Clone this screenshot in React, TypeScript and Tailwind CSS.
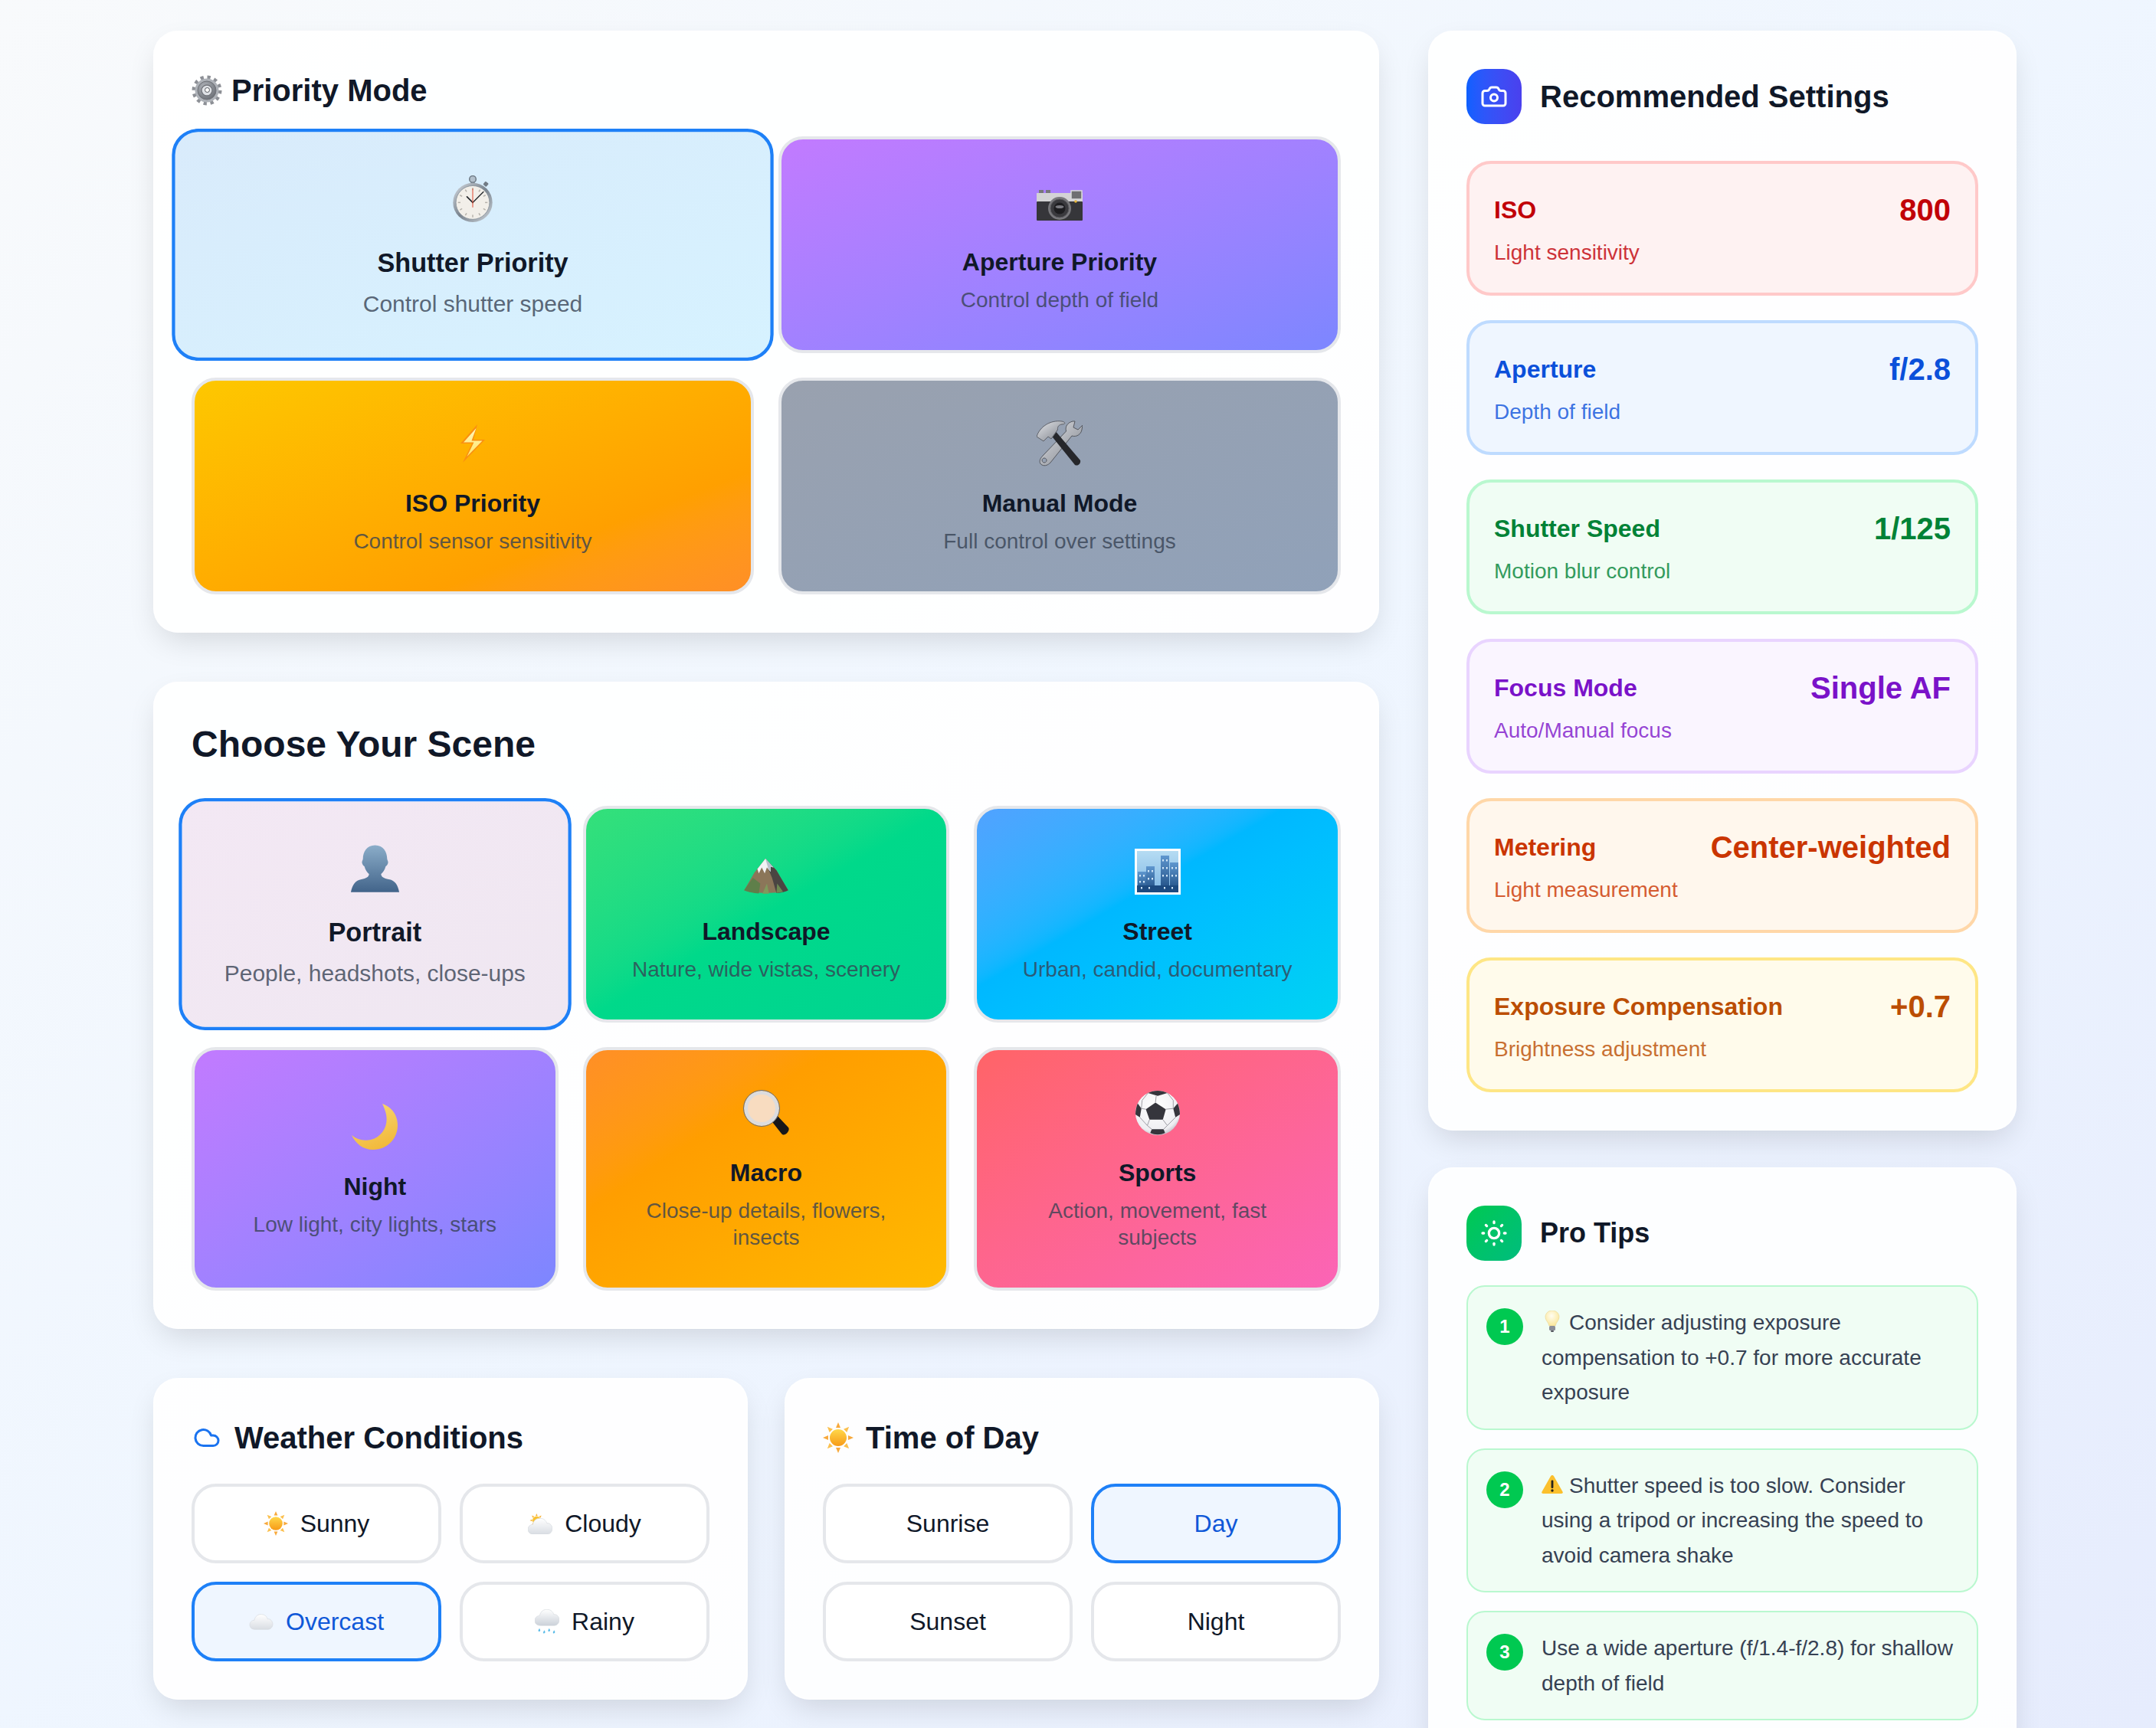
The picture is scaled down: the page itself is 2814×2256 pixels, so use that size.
import React from "react";
import { Camera, Cloud, SunMedium } from "lucide-react";

const FONT = "font-['Liberation_Sans',Arial,sans-serif]";

function Gear({ className = "" }: { className?: string }) {
  return (
    <svg viewBox="0 0 40 40" className={className}>
      <defs>
        <radialGradient id="gearBody" cx="40%" cy="35%" r="75%">
          <stop offset="0%" stopColor="#b9bdc3" />
          <stop offset="100%" stopColor="#62666d" />
        </radialGradient>
      </defs>
      <circle cx="20" cy="20" r="17" fill="none" stroke="#8d9096" strokeWidth="5" strokeDasharray="4.2 4.7" />
      <circle cx="20" cy="20" r="15.500" fill="#aeb2b8" />
      <circle cx="20" cy="20" r="12" fill="url(#gearBody)" stroke="#6f7278" strokeWidth="1" />
      <circle cx="20" cy="20" r="7" fill="#dfe2e6" stroke="#74777d" strokeWidth="1.400" />
      <circle cx="20.500" cy="19.500" r="3" fill="#fafafa" stroke="#55585e" strokeWidth="1" />
    </svg>
  );
}

function Stopwatch({ className = "" }: { className?: string }) {
  const ticks = Array.from({ length: 12 }, (_, i) => i * 30);
  return (
    <svg viewBox="0 0 50 58" className={className}>
      <defs>
        <linearGradient id="swRim" x1="0" y1="0" x2="1" y2="1">
          <stop offset="0%" stopColor="#d6dce2" />
          <stop offset="50%" stopColor="#79838e" />
          <stop offset="100%" stopColor="#cfd5db" />
        </linearGradient>
      </defs>
      <rect x="22.500" y="5" width="5" height="7" fill="#7f8a95" />
      <circle cx="25" cy="4.500" r="4" fill="#b3c0cc" stroke="#6e7a85" strokeWidth="1.400" />
      <rect x="38.500" y="8" width="5" height="5" rx="1" fill="#717b85" transform="rotate(40 41 10.500)" />
      <circle cx="25" cy="33" r="24" fill="url(#swRim)" />
      <circle cx="25" cy="33" r="20.500" fill="#f2efe9" stroke="#8a939c" strokeWidth="0.800" />
      {ticks.map((a) => (
        <rect key={a} x="24.300" y="15" width="1.400" height="3" fill="#b6b2ab" transform={`rotate(${a} 25 33)`} />
      ))}
      <path d="M25 33 L38 20" stroke="#26292d" strokeWidth="1.300" strokeLinecap="round" />
      <path d="M25 33 L18 26" stroke="#26292d" strokeWidth="1.600" strokeLinecap="round" />
      <path d="M25 16 L25 39" stroke="#e2533c" strokeWidth="1" />
    </svg>
  );
}

function CameraEmoji({ className = "" }: { className?: string }) {
  return (
    <svg viewBox="0 0 60 40" className={className}>
      <rect x="3" y="0" width="6" height="5" fill="#77777c" />
      <rect x="12" y="0" width="6" height="5" fill="#77777c" />
      <rect x="0" y="4" width="60" height="12" fill="#d3d3d5" />
      <rect x="0" y="15" width="60" height="25" rx="1" fill="#36363a" />
      <rect x="45" y="1" width="14" height="11" fill="#6f6f72" stroke="#d9d9db" strokeWidth="1.500" />
      <circle cx="30" cy="24" r="15" fill="#78787c" />
      <circle cx="30" cy="24" r="12" fill="#3a3a3e" stroke="#5a5a5e" strokeWidth="1" />
      <circle cx="30" cy="24" r="7.500" fill="#1d1d20" />
      <ellipse cx="30" cy="22" rx="5.500" ry="2" fill="#7a7a80" />
      <circle cx="51" cy="15" r="1.800" fill="#e8b73a" />
    </svg>
  );
}

function HammerWrench({ className = "" }: { className?: string }) {
  return (
    <svg viewBox="0 0 60 60" className={className}>
      <defs>
        <linearGradient id="hwMetal" x1="0" y1="0" x2="1" y2="1">
          <stop offset="0%" stopColor="#e4e6ea" />
          <stop offset="100%" stopColor="#7c8088" />
        </linearGradient>
      </defs>
      <path
        d="M47 1 C40 3 37 8 38.500 14 L8 46 C3 51 3 56 7 58 C11 60 15 58 18 55 L46 20 C52 22 58 18 59 12 L60 6 L54 12 L48 9 L50 1 Z M10 49 A3 3 0 1 0 10.100 49 Z"
        fillRule="evenodd"
        fill="url(#hwMetal)"
        stroke="#55585f"
        strokeWidth="1"
      />
      <path d="M17 17 L23 12 L57 52 C58 56 54 60 50 58 Z" fill="#26272b" />
      <path d="M0 21 C4 8 18 -1 33 1 C38 2 38 5 33 5 C29 5.500 27 8 27.500 12 L19 24 L15 21 L9 27 Z" fill="url(#hwMetal)" stroke="#5d6068" strokeWidth="1" />
    </svg>
  );
}

function Bolt({ className = "" }: { className?: string }) {
  return (
    <svg viewBox="0 0 32 50" className={className}>
      <defs>
        <linearGradient id="boltFill" x1="0" y1="0" x2="0" y2="1">
          <stop offset="0%" stopColor="#fff6b8" />
          <stop offset="100%" stopColor="#ffe66a" />
        </linearGradient>
      </defs>
      <path d="M22 0 L0 25 L15 25 L3 50 L32 20 L17 20 Z" fill="#f98f12" />
      <path d="M20.500 5 L4 23.500 L17.500 23.500 L8.500 42 L28.500 21.500 L14.500 21.500 Z" fill="url(#boltFill)" />
    </svg>
  );
}

function Bust({ className = "" }: { className?: string }) {
  return (
    <svg viewBox="0 0 64 62" className={className}>
      <defs>
        <linearGradient id="bustFill" x1="0" y1="0" x2="0" y2="1">
          <stop offset="0%" stopColor="#8badc9" />
          <stop offset="100%" stopColor="#42648a" />
        </linearGradient>
      </defs>
      <path d="M32 0 C43 0 48 9 48 18 C48 20 50 21 49 24 C48 27 47 27 46 28 C45 33 42 36 40 38 C40 42 44 44 50 45 C58 46.500 62 52 64 62 L0 62 C2 52 6 46.500 14 45 C20 44 24 42 24 38 C22 36 19 33 18 28 C17 27 16 27 15 24 C14 21 16 20 16 18 C16 9 21 0 32 0 Z" fill="url(#bustFill)" />
    </svg>
  );
}

function Mountain({ className = "" }: { className?: string }) {
  return (
    <svg viewBox="0 0 60 48" className={className}>
      <path d="M29 0 L44 16 L60 43 C52 48 8 48 0 43 L14 19 Z" fill="#8b7659" />
      <path d="M29 0 L44 16 L60 43 C56 45 50 46.500 44 47 L38 26 L33 14 Z" fill="#4a4542" />
      <path d="M0 43 C5 45.500 13 47 20 47.500 L22 34 L12 26 Z" fill="#5f7f4a" />
      <path d="M25 47.800 L34 47.800 L31 34 Z" fill="#7f9a5c" />
      <path d="M44 47 L53 45 L45 34 Z" fill="#6c8a52" />
      <path d="M29 0 L40 12 L36 11 L36 18 L31 12 L28 20 L24 12 L20 20 L18 14 Z" fill="#f1f3f5" />
      <path d="M29 0 L40 12 L36 11 L36 18 L33 14 Z" fill="#b6c2cd" />
    </svg>
  );
}

function City({ className = "" }: { className?: string }) {
  const win = [
    [6, 34], [11, 34], [6, 42], [11, 42], [17, 28], [22, 28], [17, 38], [22, 38], [36, 14], [41, 14], [36, 24], [41, 24], [36, 34], [41, 34], [48, 24], [53, 24], [48, 34], [53, 34], [48, 50], [38, 50], [18, 50], [8, 50],
  ];
  return (
    <svg viewBox="0 0 60 60" className={className}>
      <defs>
        <linearGradient id="citySky" x1="0" y1="0" x2="0" y2="1">
          <stop offset="0%" stopColor="#b5dcf3" />
          <stop offset="100%" stopColor="#7fb6e4" />
        </linearGradient>
        <linearGradient id="cityTower" x1="0" y1="0" x2="0" y2="1">
          <stop offset="0%" stopColor="#5f97cf" />
          <stop offset="100%" stopColor="#1c4a80" />
        </linearGradient>
      </defs>
      <rect width="60" height="60" fill="#ffffff" />
      <rect x="3" y="3" width="54" height="54" fill="url(#citySky)" />
      <rect x="4" y="30" width="11" height="27" fill="url(#cityTower)" />
      <rect x="15" y="23" width="11" height="34" fill="url(#cityTower)" />
      <rect x="34" y="9" width="11" height="48" fill="url(#cityTower)" />
      <rect x="46" y="18" width="11" height="39" fill="url(#cityTower)" />
      <rect x="3" y="48" width="54" height="9" fill="#1c4a80" />
      {win.map(([x, y]) => (
        <rect key={`${x}-${y}`} x={x} y={y} width="2" height="2.500" fill="#cfe4f6" />
      ))}
    </svg>
  );
}

function Moon({ className = "" }: { className?: string }) {
  return (
    <svg viewBox="0 0 60 60" className={className}>
      <defs>
        <linearGradient id="moonFill" x1="0.2" y1="0" x2="0.6" y2="1">
          <stop offset="0%" stopColor="#f7d774" />
          <stop offset="100%" stopColor="#f2b93a" />
        </linearGradient>
      </defs>
      <path d="M40 0 C52 4 60 15 60 28 C60 46 46 60 28 60 C15 60 5 52 0 41 C7 47 16 49 25 47 C40 43 48 29 45 14 C44 9 42 4 40 0 Z" fill="url(#moonFill)" />
    </svg>
  );
}

function Magnifier({ className = "" }: { className?: string }) {
  return (
    <svg viewBox="0 0 60 60" className={className}>
      <path d="M35 38 L42 31 L59 49 C62 53 54 62 50 57 Z" fill="#17171a" />
      <circle cx="24" cy="24" r="20.500" fill="#f8dcc0" stroke="#dcdcde" strokeWidth="5" />
      <circle cx="24" cy="24" r="23.500" fill="none" stroke="#6f7076" strokeWidth="1" />
    </svg>
  );
}

function Ball({ className = "" }: { className?: string }) {
  return (
    <svg viewBox="0 0 60 60" className={className}>
      <defs>
        <radialGradient id="ballFill" cx="45%" cy="35%" r="70%">
          <stop offset="0%" stopColor="#ffffff" />
          <stop offset="80%" stopColor="#eeeef2" />
          <stop offset="100%" stopColor="#b3b3bd" />
        </radialGradient>
      </defs>
      <circle cx="30" cy="30" r="30" fill="url(#ballFill)" />
      <path d="M27 16 L41 25 L37 39 L19 39 L14 25 Z" fill="#35353c" />
      <path d="M30 0 C25 0 21 1 17 3 L30 7 L43 3 C39 1 35 0 30 0 Z" fill="#35353c" />
      <path d="M3 17 C1 22 0 27 0 32 L6 36 L8 24 Z" fill="#35353c" />
      <path d="M57 17 C59 22 60 27 60 32 L54 36 L51 24 Z" fill="#35353c" />
      <path d="M20 57 C26 60 34 60 40 57 L38 52 L22 52 Z" fill="#35353c" />
      <path d="M28 7 L27 16 M14 25 L8 24 M41 25 L51 24 M19 39 L16 47 L22 52 M37 39 L43 47 L38 52 M6 36 L16 47 M54 36 L43 47 M17 3 L9 13 L8 24 M43 3 L51 13 L51 24" stroke="#9a9aa2" strokeWidth="1" fill="none" />
    </svg>
  );
}

function SunEmoji({ className = "", id }: { className?: string; id: string }) {
  const rays = Array.from({ length: 8 }, (_, i) => i * 45);
  return (
    <svg viewBox="0 0 40 40" className={className}>
      <defs>
        <linearGradient id={id} x1="0" y1="0" x2="0" y2="1">
          <stop offset="0%" stopColor="#ffd84a" />
          <stop offset="100%" stopColor="#f79a17" />
        </linearGradient>
      </defs>
      {rays.map((a) => (
        <path key={a} d="M20 0 L23 7 L17 7 Z" fill={a % 90 === 0 ? "#f8a93c" : "#fbc04f"} transform={`rotate(${a} 20 20)`} />
      ))}
      <circle cx="20" cy="20" r="11" fill={`url(#${id})`} />
    </svg>
  );
}

function CloudShape({ fill }: { fill: string }) {
  return (
    <path
      d="M9 34 C3 34 0 30 0 26 C0 21 4 18 8 18 C9 11 15 7 21 8 C26 8 30 12 31 16 C36 15 40 20 40 25 C40 30 36 34 32 34 Z"
      fill={fill}
      stroke="#d3d7dc"
      strokeWidth="0.8"
    />
  );
}

function CloudEmoji({ className = "", id }: { className?: string; id: string }) {
  return (
    <svg viewBox="-1 7 42 28" className={className}>
      <defs>
        <linearGradient id={id} x1="0" y1="0" x2="0" y2="1">
          <stop offset="0%" stopColor="#ffffff" />
          <stop offset="100%" stopColor="#d9dde3" />
        </linearGradient>
      </defs>
      <CloudShape fill={`url(#${id})`} />
    </svg>
  );
}

function SunCloud({ className = "" }: { className?: string }) {
  return (
    <svg viewBox="0 0 40 34" className={className}>
      <defs>
        <linearGradient id="sunCloudFill" x1="0" y1="0" x2="0" y2="1">
          <stop offset="0%" stopColor="#ffffff" />
          <stop offset="100%" stopColor="#d9dde3" />
        </linearGradient>
      </defs>
      <g transform="translate(3 0) scale(0.56)">
        {[0, 45, 90, 135, 180, 225, 270, 315].map((a) => (
          <path key={a} d="M20 0 L23 7 L17 7 Z" fill="#f8b53e" transform={`rotate(${a} 20 20)`} />
        ))}
        <circle cx="20" cy="20" r="12" fill="#f9c232" />
      </g>
      <g transform="translate(0 0)">
        <CloudShape fill="url(#sunCloudFill)" />
      </g>
    </svg>
  );
}

function RainCloud({ className = "" }: { className?: string }) {
  const drops = [
    [6, 31], [14, 34], [22, 31], [30, 34],
  ];
  return (
    <svg viewBox="0 0 40 40" className={className}>
      <defs>
        <linearGradient id="rainCloudFill" x1="0" y1="0" x2="0" y2="1">
          <stop offset="0%" stopColor="#ffffff" />
          <stop offset="100%" stopColor="#cbd1d9" />
        </linearGradient>
      </defs>
      <g transform="translate(0 -7.500)">
        <CloudShape fill="url(#rainCloudFill)" />
      </g>
      {drops.map(([x, y]) => (
        <path key={x} d={`M${x + 1.5} ${y} C${x + 1} ${y + 2} ${x - 1} ${y + 3} ${x} ${y + 5} C${x + 1} ${y + 6} ${x + 3} ${y + 5} ${x + 3} ${y + 3} Z`} fill="#5bbce8" />
      ))}
    </svg>
  );
}

function Bulb({ className = "" }: { className?: string }) {
  return (
    <svg viewBox="0 0 28 28" className={className}>
      <defs>
        <radialGradient id="bulbFill" cx="45%" cy="35%" r="65%">
          <stop offset="0%" stopColor="#fffdf0" />
          <stop offset="100%" stopColor="#fbe79a" />
        </radialGradient>
      </defs>
      <path d="M14 0 C8.500 0 5 4 5 8.500 C5 13 9 15 10 20 L18 20 C19 15 23 13 23 8.500 C23 4 19.500 0 14 0 Z" fill="url(#bulbFill)" stroke="#ecd998" strokeWidth="0.700" />
      <rect x="10" y="20" width="8" height="6" rx="1.500" fill="#8c8f98" />
      <rect x="12" y="26" width="4" height="2" rx="1" fill="#55585f" />
    </svg>
  );
}

function Warn({ className = "" }: { className?: string }) {
  return (
    <svg viewBox="0 0 28 28" className={className}>
      <path d="M14 2 C15 2 15.700 2.500 16.200 3.500 L27.500 23.500 C28.300 25 27.500 26 26 26 L2 26 C0.500 26 -0.300 25 0.500 23.500 L11.800 3.500 C12.300 2.500 13 2 14 2 Z" fill="#fbc02d" />
      <rect x="12.600" y="8.500" width="2.800" height="10.500" rx="1.200" fill="#26231d" />
      <circle cx="14" cy="22" r="1.700" fill="#26231d" />
    </svg>
  );
}

type CardDef = {
  title: string;
  desc: string;
  bg: string;
  icon: React.ReactNode;
  selected?: boolean;
};

function ModeCard({ title, desc, bg, icon, selected }: CardDef) {
  return (
    <div
      className={`flex flex-col items-center justify-center rounded-[32px] border-4 p-12 text-center bg-linear-to-br ${bg} ${
        selected ? "relative z-10 scale-[1.07] border-[#1e80f7]" : "border-gray-200"
      }`}
    >
      <div className="mb-5 flex h-[68px] items-center justify-center">{icon}</div>
      <div className="mb-2 text-[32px] leading-[48px] font-bold text-gray-900">{title}</div>
      <div className="text-[28px] leading-[35px] text-gray-700/80">{desc}</div>
    </div>
  );
}

function OptionButton({ label, icon, selected }: { label: string; icon?: React.ReactNode; selected?: boolean }) {
  return (
    <div
      className={`flex h-[104px] items-center justify-center gap-4 rounded-[32px] border-4 text-[32px] ${
        selected ? "border-[#1e80f7] bg-blue-50 text-[#0f58d8]" : "border-gray-200 bg-white text-gray-900"
      }`}
    >
      {icon}
      <span>{label}</span>
    </div>
  );
}

const modes: CardDef[] = [
  { title: "Shutter Priority", desc: "Control shutter speed", bg: "from-[#d9ebfb] to-[#d6f2ff]", selected: true, icon: <Stopwatch className="h-[58px] w-[50px]" /> },
  { title: "Aperture Priority", desc: "Control depth of field", bg: "from-purple-400 to-indigo-400", icon: <CameraEmoji className="mt-2 h-[40px] w-[60px]" /> },
  { title: "ISO Priority", desc: "Control sensor sensitivity", bg: "from-yellow-400 to-[#ff8f26]", icon: <Bolt className="h-[50px] w-[32px]" /> },
  { title: "Manual Mode", desc: "Full control over settings", bg: "from-gray-400 to-slate-400", icon: <HammerWrench className="h-[60px] w-[60px]" /> },
];

const scenes: CardDef[] = [
  { title: "Portrait", desc: "People, headshots, close-ups", bg: "from-[#f3e8f4] to-[#efe7f1]", selected: true, icon: <Bust className="h-[58px] w-[59px]" /> },
  { title: "Landscape", desc: "Nature, wide vistas, scenery", bg: "from-[#34e07a] via-[#00d98a] to-[#00d492]", icon: <Mountain className="mt-3 h-[46px] w-[58px]" /> },
  { title: "Street", desc: "Urban, candid, documentary", bg: "from-blue-400 via-sky-400 to-cyan-400", icon: <City className="h-[60px] w-[60px]" /> },
  { title: "Night", desc: "Low light, city lights, stars", bg: "from-purple-400 to-indigo-400", icon: <Moon className="h-[60px] w-[60px]" /> },
  { title: "Macro", desc: "Close-up details, flowers, insects", bg: "from-[#ff8f26] to-amber-400", icon: <Magnifier className="h-[60px] w-[60px]" /> },
  { title: "Sports", desc: "Action, movement, fast subjects", bg: "from-red-400 to-pink-400", icon: <Ball className="h-[58px] w-[58px]" /> },
];

const settings = [
  { label: "ISO", value: "800", desc: "Light sensitivity", box: "border-red-200 bg-red-50", text: "text-red-700", sub: "text-red-700/80" },
  { label: "Aperture", value: "f/2.8", desc: "Depth of field", box: "border-blue-200 bg-blue-50", text: "text-[#0b50da]", sub: "text-[#0b50da]/80" },
  { label: "Shutter Speed", value: "1/125", desc: "Motion blur control", box: "border-green-200 bg-green-50", text: "text-green-700", sub: "text-green-700/80" },
  { label: "Focus Mode", value: "Single AF", desc: "Auto/Manual focus", box: "border-purple-200 bg-purple-50", text: "text-[#7a12c9]", sub: "text-[#7a12c9]/80" },
  { label: "Metering", value: "Center-weighted", desc: "Light measurement", box: "border-orange-200 bg-orange-50", text: "text-orange-700", sub: "text-orange-700/80" },
  { label: "Exposure Compensation", value: "+0.7", desc: "Brightness adjustment", box: "border-amber-200 bg-amber-50", text: "text-amber-700", sub: "text-amber-700/80" },
];

const cardClass =
  "rounded-[32px] border-2 border-white/50 bg-white/90 p-12 shadow-[0_16px_40px_-8px_rgba(0,0,0,0.14)]";

function Tip({ n, children }: { n: number; children: React.ReactNode }) {
  return (
    <div className="flex gap-6 rounded-[24px] border-2 border-green-200 bg-green-50 p-6">
      <div className="mt-1 flex h-12 w-12 shrink-0 items-center justify-center rounded-full bg-green-500 text-[24px] font-bold text-white">
        {n}
      </div>
      <p className="text-[28px] leading-[45.5px] text-gray-700">{children}</p>
    </div>
  );
}

export default function App() {
  return (
    <div className={`${FONT} h-[2256px] overflow-hidden bg-linear-to-br from-slate-50 via-blue-50 to-[#e6ecfd] pt-10 pl-[200px]`}>
      <div className="flex items-start gap-16">
        <div className="flex w-[1600px] shrink-0 flex-col gap-16">
          <section className={cardClass}>
            <div className="mb-8 flex h-14 items-center gap-3">
              <Gear className="h-10 w-10" />
              <h2 className="text-[40px] leading-[56px] font-bold text-gray-900">Priority Mode</h2>
            </div>
            <div className="grid grid-cols-2 gap-8">
              {modes.map((m) => (
                <ModeCard key={m.title} {...m} />
              ))}
            </div>
          </section>

          <section className={cardClass}>
            <h2 className="mb-12 text-[48px] leading-[64px] font-bold text-gray-900">Choose Your Scene</h2>
            <div className="grid grid-cols-3 gap-8">
              {scenes.map((s) => (
                <ModeCard key={s.title} {...s} />
              ))}
            </div>
          </section>

          <div className="grid grid-cols-2 gap-12">
            <section className={cardClass}>
              <div className="mb-8 flex h-14 items-center">
                <Cloud className="mr-[18px] ml-[2px] h-9 w-9 text-[#1a73f0]" />
                <h2 className="text-[40px] leading-[56px] font-bold text-gray-900">Weather Conditions</h2>
              </div>
              <div className="grid grid-cols-2 gap-6">
                <OptionButton label="Sunny" icon={<SunEmoji id="sunSunny" className="h-8 w-8" />} />
                <OptionButton label="Cloudy" icon={<SunCloud className="h-[27px] w-8" />} />
                <OptionButton label="Overcast" selected icon={<CloudEmoji id="cloudOver" className="h-[21px] w-8" />} />
                <OptionButton label="Rainy" icon={<RainCloud className="h-8 w-8" />} />
              </div>
            </section>
            <section className={cardClass}>
              <div className="mb-8 flex h-14 items-center gap-4">
                <SunEmoji id="sunTime" className="h-10 w-10" />
                <h2 className="text-[40px] leading-[56px] font-bold text-gray-900">Time of Day</h2>
              </div>
              <div className="grid grid-cols-2 gap-6">
                <OptionButton label="Sunrise" />
                <OptionButton label="Day" selected />
                <OptionButton label="Sunset" />
                <OptionButton label="Night" />
              </div>
            </section>
          </div>
        </div>

        <div className="flex w-[768px] shrink-0 flex-col gap-12">
          <section className={cardClass}>
            <div className="mb-12 flex items-center gap-6">
              <div className="flex h-[72px] w-[72px] items-center justify-center rounded-[24px] bg-linear-to-r from-[#0b60ff] to-[#4a40ee]">
                <Camera className="h-9 w-9 text-white" />
              </div>
              <h2 className="text-[40px] leading-[56px] font-bold text-gray-900">Recommended Settings</h2>
            </div>
            <div className="flex flex-col gap-8">
              {settings.map((s) => (
                <div key={s.label} className={`rounded-[32px] border-4 p-8 ${s.box}`}>
                  <div className="mb-2 flex h-14 items-center justify-between">
                    <span className={`text-[32px] font-bold ${s.text}`}>{s.label}</span>
                    <span className={`text-[40px] font-bold ${s.text}`}>{s.value}</span>
                  </div>
                  <div className={`text-[28px] leading-10 ${s.sub}`}>{s.desc}</div>
                </div>
              ))}
            </div>
          </section>

          <section className={cardClass}>
            <div className="mb-8 flex items-center gap-6">
              <div className="flex h-[72px] w-[72px] items-center justify-center rounded-[24px] bg-linear-to-br from-green-500 to-emerald-500">
                <SunMedium className="h-10 w-10 text-white" />
              </div>
              <h2 className="text-[36px] leading-[56px] font-bold text-gray-900">Pro Tips</h2>
            </div>
            <div className="flex flex-col gap-6">
              <Tip n={1}>
                <Bulb className="mr-2 inline-block h-7 w-7 align-[-3px]" />
                Consider adjusting exposure compensation to +0.7 for more accurate exposure
              </Tip>
              <Tip n={2}>
                <Warn className="mr-2 inline-block h-7 w-7 align-[-3px]" />
                Shutter speed is too slow. Consider using a tripod or increasing the speed to avoid camera shake
              </Tip>
              <Tip n={3}>Use a wide aperture (f/1.4-f/2.8) for shallow depth of field</Tip>
            </div>
          </section>
        </div>
      </div>
    </div>
  );
}
